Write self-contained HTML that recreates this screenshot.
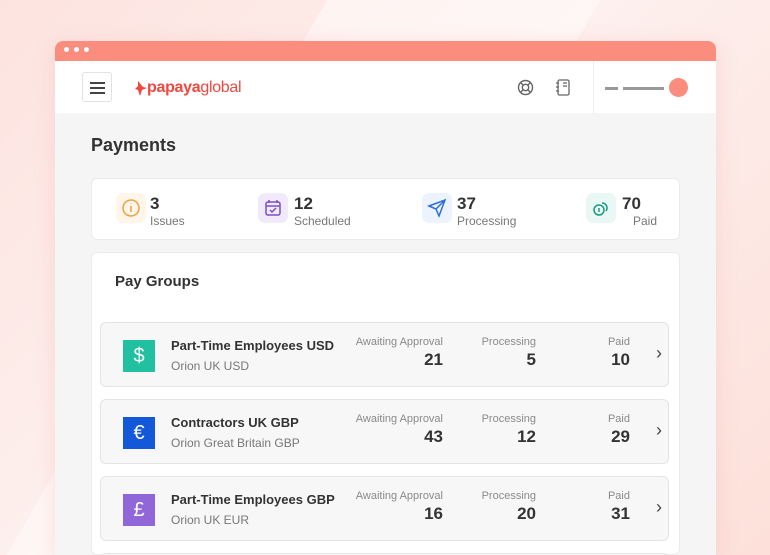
<!DOCTYPE html>
<html><head><style>
*{margin:0;padding:0;box-sizing:border-box}
html,body{width:770px;height:555px;overflow:hidden}
body{font-family:"Liberation Sans",sans-serif;background:linear-gradient(135deg,#fde3df 0%,#fdf0ee 45%,#fde0da 100%);position:relative}
.bgs{position:absolute;inset:0;background:linear-gradient(120deg,transparent 0 30%,rgba(255,255,255,.45) 30% 55%,transparent 55%)}
.win{position:absolute;left:55px;top:41px;width:661px;height:514px;background:#f5f5f5;border-radius:8px 8px 0 0;overflow:hidden;box-shadow:0 4px 20px rgba(240,150,140,.25)}
.bar{height:20px;background:#fb8d7e;position:relative}
.bar i{position:absolute;top:6px;width:5px;height:5px;border-radius:50%;background:#fff}
.nav{height:52px;background:#fff;position:relative}
.t{position:absolute;white-space:nowrap}
.card{position:absolute;background:#fff;border:1px solid #ebebeb;border-radius:6px}
.row{position:absolute;left:45px;width:569px;height:65px;background:#f7f7f7;border:1px solid #e4e4e4;border-radius:6px}
.ic{position:absolute;left:22px;top:17px;width:32px;height:32px;color:#fff;font-size:20px;text-align:center;line-height:32px}
.h{font-size:13px;color:#333;font-weight:bold}
.s{font-size:12px;color:#777}
.lab{font-size:11px;color:#8a8a8a;text-align:right}
.num{font-size:17px;color:#333;font-weight:bold;text-align:right}
.si{position:absolute;top:14px;width:30px;height:30px;border-radius:7px}
</style></head><body>
<div class="bgs"></div>
<div class="win">
 <div class="bar"><i style="left:9px"></i><i style="left:19px"></i><i style="left:29px"></i></div>
 <div class="nav">
  <div style="position:absolute;left:27px;top:11px;width:30px;height:30px;border:1px solid #e2e2e2;border-radius:3px">
   <div style="position:absolute;left:7px;top:9px;width:15px;height:2px;background:#444"></div>
   <div style="position:absolute;left:7px;top:14px;width:15px;height:2px;background:#444"></div>
   <div style="position:absolute;left:7px;top:19px;width:15px;height:2px;background:#444"></div>
  </div>
  <svg style="position:absolute;left:79px;top:19px" width="14" height="17" viewBox="0 0 14 17"><path d="M4 1 L9 7 L13 8 L8 10 L6 16 L4 10 L1 9 L4 6Z" fill="#f0483e"/></svg>
  <div class="t" style="left:92px;top:18px;font-size:16px;color:#f0483e;font-weight:bold;letter-spacing:-.3px">papaya<span style="font-weight:normal">global</span></div>
  <svg style="position:absolute;left:462px;top:18px" width="17" height="17" viewBox="0 0 17 17" fill="none" stroke="#666" stroke-width="1.4"><circle cx="8.5" cy="8.5" r="7"/><circle cx="8.5" cy="8.5" r="3.2"/><path d="M3.5 3.5l2.7 2.7M13.5 3.5l-2.7 2.7M3.5 13.5l2.7-2.7M13.5 13.5l-2.7-2.7"/></svg>
  <svg style="position:absolute;left:500px;top:18px" width="16" height="17" viewBox="0 0 16 17" fill="none" stroke="#666" stroke-width="1.3"><rect x="3" y="1" width="11" height="15" rx="1.5"/><path d="M1 4h3M1 8h3M1 12h3M8 4h4M8 7h4"/></svg>
  <div style="position:absolute;left:538px;top:0;width:1px;height:52px;background:#eee"></div>
  <div style="position:absolute;left:550px;top:26px;width:13px;height:3px;background:#999"></div>
  <div style="position:absolute;left:568px;top:26px;width:41px;height:3px;background:#999"></div>
  <div style="position:absolute;left:614px;top:17px;width:19px;height:19px;border-radius:50%;background:#fb8d7e"></div>
 </div>
 <div class="t" style="left:36px;top:94px;font-size:18px;font-weight:bold;color:#333">Payments</div>
 <div class="card" style="left:36px;top:137px;width:589px;height:62px">
  <div class="si" style="left:24px;background:#fff5e8"><svg width="30" height="30"><circle cx="15" cy="15" r="8" fill="none" stroke="#f0a040" stroke-width="1.5"/><path d="M15 13v6M15 10.5v.5" stroke="#f0a040" stroke-width="1.5"/></svg></div>
  <div class="t num" style="left:58px;top:15px">3</div><div class="t s" style="left:58px;top:35px">Issues</div>
  <div class="si" style="left:166px;background:#f1eafc"><svg width="30" height="30" fill="none" stroke="#7a50c8" stroke-width="1.5"><rect x="8" y="9" width="14" height="13" rx="2"/><path d="M8 13h14M11 7v3M19 7v3M12 17l2 2 4-4"/></svg></div>
  <div class="t num" style="left:202px;top:15px">12</div><div class="t s" style="left:202px;top:35px">Scheduled</div>
  <div class="si" style="left:330px;background:#edf3fc"><svg width="30" height="30" fill="none" stroke="#2d6fd8" stroke-width="1.5"><path d="M7 13l16-6-6 16-3-7z M14 16l9-9"/></svg></div>
  <div class="t num" style="left:365px;top:15px">37</div><div class="t s" style="left:365px;top:35px">Processing</div>
  <div class="si" style="left:494px;background:#e9f8f4"><svg width="30" height="30" fill="none" stroke="#1a9a80" stroke-width="1.5"><circle cx="13" cy="17" r="5"/><path d="M13 15v4M16 10a5 5 0 0 1 4 8"/></svg></div>
  <div class="t num" style="left:530px;top:15px">70</div><div class="t s" style="left:541px;top:35px">Paid</div>
 </div>
 <div class="card" style="left:36px;top:211px;width:589px;height:303px"></div>
 <div class="t" style="left:60px;top:232px;font-size:15px;font-weight:bold;color:#333">Pay Groups</div>

 <div class="row" style="top:281px"><div class="ic" style="background:#20c0a0">$</div>
  <div class="t h" style="left:70px;top:15px">Part-Time Employees USD</div><div class="t s" style="left:70px;top:36px">Orion UK USD</div>
  <div class="t lab" style="right:225px;top:13px">Awaiting Approval</div><div class="t num" style="right:225px;top:27px">21</div>
  <div class="t lab" style="right:132px;top:13px">Processing</div><div class="t num" style="right:132px;top:27px">5</div>
  <div class="t lab" style="right:38px;top:13px">Paid</div><div class="t num" style="right:38px;top:27px">10</div>
  <div class="t" style="right:6px;top:20px;font-size:18px;color:#444">&#8250;</div></div>

 <div class="row" style="top:358px"><div class="ic" style="background:#1258d8">€</div>
  <div class="t h" style="left:70px;top:15px">Contractors UK GBP</div><div class="t s" style="left:70px;top:36px">Orion Great Britain GBP</div>
  <div class="t lab" style="right:225px;top:13px">Awaiting Approval</div><div class="t num" style="right:225px;top:27px">43</div>
  <div class="t lab" style="right:132px;top:13px">Processing</div><div class="t num" style="right:132px;top:27px">12</div>
  <div class="t lab" style="right:38px;top:13px">Paid</div><div class="t num" style="right:38px;top:27px">29</div>
  <div class="t" style="right:6px;top:20px;font-size:18px;color:#444">&#8250;</div></div>

 <div class="row" style="top:435px"><div class="ic" style="background:#9066d8">£</div>
  <div class="t h" style="left:70px;top:15px">Part-Time Employees GBP</div><div class="t s" style="left:70px;top:36px">Orion UK EUR</div>
  <div class="t lab" style="right:225px;top:13px">Awaiting Approval</div><div class="t num" style="right:225px;top:27px">16</div>
  <div class="t lab" style="right:132px;top:13px">Processing</div><div class="t num" style="right:132px;top:27px">20</div>
  <div class="t lab" style="right:38px;top:13px">Paid</div><div class="t num" style="right:38px;top:27px">31</div>
  <div class="t" style="right:6px;top:20px;font-size:18px;color:#444">&#8250;</div></div>

 <div class="row" style="top:512px;height:42px"></div>
</div>
</body></html>
